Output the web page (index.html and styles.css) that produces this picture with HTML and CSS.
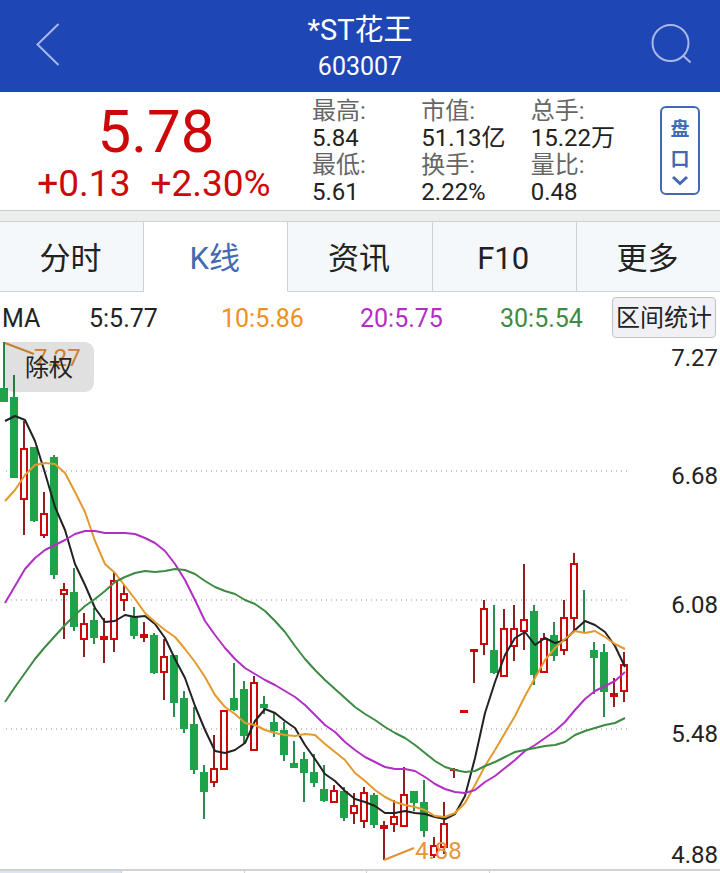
FILE: index.html
```html
<!DOCTYPE html>
<html lang="zh-CN">
<head>
    <meta charset="UTF-8">
    <meta name="viewport" content="width=device-width, initial-scale=1.0">
    <title>*ST花王 603007</title>
    <link rel="stylesheet" href="styles.css">
</head>
<body>
    <header class="topbar">
        <button class="icon-btn" type="button" aria-label="返回">
            <svg width="42" height="44" viewBox="0 0 42 44"><path d="M30.500 2 L9.500 22.500 L30.500 43"/></svg>
        </button>
        <div class="stock">
            <h1 class="stock-name">*ST花王</h1>
            <div class="stock-code">603007</div>
        </div>
        <button class="icon-btn" type="button" aria-label="搜索">
            <svg width="42" height="42" viewBox="0 0 42 42"><circle cx="20.500" cy="20" r="18"/><path d="M33 32.500 L40.500 39.500"/></svg>
        </button>
    </header>

    <section class="quote">
        <div class="price">
            <div class="price-now">5.78</div>
            <div class="price-change"><span>+0.13</span><span>+2.30%</span></div>
        </div>
        <dl class="stats">
            <div><dt>最高:</dt><dd>5.84</dd></div>
            <div><dt>市值:</dt><dd>51.13亿</dd></div>
            <div><dt>总手:</dt><dd>15.22万</dd></div>
            <div><dt>最低:</dt><dd>5.61</dd></div>
            <div><dt>换手:</dt><dd>2.22%</dd></div>
            <div><dt>量比:</dt><dd>0.48</dd></div>
        </dl>
        <button class="depth-btn" type="button">
            <span>盘</span>
            <span>口</span>
            <svg width="18" height="12" viewBox="0 0 18 12"><path d="M2 2 L9 8.500 L16 2"/></svg>
        </button>
    </section>

    <nav class="tabs">
        <button class="tab" type="button">分时</button>
        <button class="tab active" type="button">K线</button>
        <button class="tab" type="button">资讯</button>
        <button class="tab" type="button">F10</button>
        <button class="tab" type="button">更多</button>
    </nav>

    <div class="ma-row">
        <span>MA</span>
        <span>5:5.77</span>
        <span class="ma10">10:5.86</span>
        <span class="ma20">20:5.75</span>
        <span class="ma30">30:5.54</span>
        <button class="range-btn" type="button">区间统计</button>
    </div>

    <main class="chart-wrap">
        <svg class="chart" viewBox="0 342 720 527">
            <g class="grid">
                <path d="M6 471 H627"/>
                <path d="M6 600 H627"/>
                <path d="M6 729 H627"/>
            </g>
            <g id="candles"></g>
            <g id="averages"></g>
            <g class="mark">
                <path d="M5 343 L34 354"/>
                <text x="34" y="366">7.27</text>
                <path d="M384 860 L414 848"/>
                <text x="415" y="859">4.88</text>
            </g>
            <g class="axis">
                <text x="718" y="366">7.27</text>
                <text x="718" y="484">6.68</text>
                <text x="718" y="613">6.08</text>
                <text x="718" y="742">5.48</text>
                <text x="718" y="863">4.88</text>
            </g>
        </svg>
        <button class="rights-btn" type="button">除权</button>
    </main>

    <div class="indicators">
        <div class="indicator on"></div>
        <div class="indicator"></div>
        <div class="indicator"></div>
        <div class="indicator"></div>
        <div class="indicator last"></div>
    </div>

    <script src="chart.js"></script>
</body>
</html>
```
FILE: styles.css
```css
* {
    box-sizing: border-box;
}
body {
    margin: 0;
    background-color: #fff;
    color: #222;
    font-family: Roboto, "Noto Sans CJK SC", sans-serif;
    font-size: 24px;
    line-height: 27px;
}
button {
    margin: 0;
    padding: 0;
    border: none;
    background: none;
    color: inherit;
    font: inherit;
    cursor: pointer;
}
svg {
    display: block;
}

/* Header */
.topbar {
    display: flex;
    justify-content: space-between;
    align-items: center;
    height: 92px;
    padding: 0 28px 4px 28px;
    background-color: #1e46b4;
    color: #fff;
}
.icon-btn {
    display: flex;
    width: 42px;
}
.icon-btn svg {
    fill: none;
    stroke: #a9b8ea;
    stroke-width: 2;
}
.stock {
    padding-top: 6px;
    text-align: center;
}
.stock-name {
    margin: 0;
    font-size: 29px;
    font-weight: 400;
    line-height: 40px;
}
.stock-code {
    font-size: 25px;
    line-height: 34px;
}

/* Quote */
.quote {
    display: grid;
    grid-template-columns: 312px 1fr 40px;
    padding: 6px 20px 4px 0;
}
.price {
    padding-top: 4px;
    color: #cc0808;
    text-align: center;
}
.price-now {
    font-size: 60px;
    line-height: 60px;
}
.price-change {
    display: flex;
    justify-content: center;
    gap: 20px;
    padding-right: 4px;
    font-size: 37px;
    line-height: 44px;
}
.stats {
    display: grid;
    grid-template-columns: repeat(3, 1fr);
    margin: 0 20px 0 0;
}
.stats dt {
    color: #666;
}
.stats dd {
    margin: 0;
}
.depth-btn {
    display: flex;
    flex-direction: column;
    align-items: center;
    height: 89px;
    margin-top: 8px;
    padding-top: 7px;
    border: 2px solid #4369b2;
    border-radius: 6px;
    color: #4369b2;
    font-size: 19px;
    font-weight: 700;
    line-height: 30px;
}
.depth-btn svg {
    fill: none;
    stroke: #4369b2;
    stroke-width: 3;
}

/* Tabs */
.tabs {
    display: flex;
    padding-top: 10px;
    border-top: 1px solid #ccc;
    background-color: #eceeee;
}
.tab {
    flex: 1;
    height: 71px;
    padding: 4px 2px 0 0;
    border: 1px solid #d0d0d0;
    border-left: none;
    background-color: #f4f8fb;
    font-size: 31px;
}
.tab:last-child {
    border-right: none;
}
.tab.active {
    border-bottom-color: #fff;
    background-color: #fff;
    color: #4369b2;
}

/* Moving averages */
.ma-row {
    display: grid;
    grid-template-columns: 87px 132px 139px 1fr 112px 104px;
    align-items: center;
    height: 50px;
    padding: 0 4px 0 2px;
}
.ma-row span {
    padding-top: 3px;
    font-size: 25px;
}
.ma10 {
    color: #ed9121;
}
.ma20 {
    color: #b22fc4;
}
.ma30 {
    color: #3d8b43;
}
.range-btn {
    height: 41px;
    padding-top: 2px;
    border: 1px solid #c4c4c6;
    border-radius: 4px;
    background-color: #f0f0f5;
}

/* Chart */
.chart-wrap {
    position: relative;
}
.chart {
    width: 100%;
    height: auto;
}
.grid path {
    stroke: #c8c8c8;
    stroke-width: 2;
    stroke-dasharray: 1 4;
}
.wick-up {
    fill: #8f2020;
}
.wick-down {
    fill: #2e8b4e;
}
.body-down {
    fill: #1ea34b;
}
.body-flat {
    fill: #cc0808;
}
.body-up {
    fill: #fff;
    stroke: #cc0808;
    stroke-width: 2;
}
.line {
    fill: none;
    stroke-width: 2;
    stroke-linejoin: round;
}
.line-ma5 {
    stroke: #222;
}
.line-ma10 {
    stroke: #e39a2c;
}
.line-ma20 {
    stroke: #b22fc4;
}
.line-ma30 {
    stroke: #3d8b43;
}
.mark path {
    stroke: #df9336;
    stroke-width: 2;
}
.mark text {
    fill: #e8943a;
}
.axis text {
    fill: #222;
    text-anchor: end;
}
.rights-btn {
    position: absolute;
    top: 0;
    left: 4px;
    width: 90px;
    height: 50px;
    padding-top: 3px;
    border-radius: 0 9px 9px 9px;
    background-color: rgba(0, 0, 0, 0.12);
}

/* Indicator strip */
.indicators {
    display: flex;
    height: 4px;
    border-top: 2px solid #d2d2d2;
}
.indicator {
    flex: 0 0 17%;
    border-right: 1px solid #ccc;
}
.indicator.on {
    background-color: #dde5f2;
}
.indicator.last {
    flex: 1;
    border-right: none;
}
```
FILE: chart.js
```javascript
// kind, high, top, bottom, low - one candle every 10 units
// d = down, u = up, f = flat
const candles = [
    ['d', 342, 388, 402, 402], ['d', 375, 397, 478, 478], ['u', 421, 448, 500, 535],
    ['d', 447, 447, 521, 522], ['u', 492, 513, 536, 538], ['d', 455, 457, 575, 579],
    ['u', 583, 589, 595, 639], ['d', 568, 592, 627, 631], ['u', 613, 623, 640, 657],
    ['d', 608, 620, 638, 644], ['f', 618, 636, 640, 663], ['u', 572, 580, 640, 652],
    ['u', 585, 593, 601, 611], ['d', 607, 616, 636, 639], ['f', 622, 634, 638, 642],
    ['d', 633, 635, 673, 674], ['u', 639, 656, 673, 700], ['d', 655, 655, 703, 717],
    ['d', 691, 698, 729, 733], ['d', 707, 724, 770, 774], ['d', 765, 772, 792, 819],
    ['u', 735, 768, 783, 787], ['u', 710, 710, 770, 770], ['d', 663, 698, 710, 711],
    ['d', 681, 689, 736, 744], ['u', 676, 682, 751, 751], ['d', 696, 704, 708, 714],
    ['d', 713, 722, 731, 737], ['d', 722, 730, 755, 761], ['d', 741, 763, 768, 768],
    ['d', 752, 759, 773, 802], ['d', 754, 772, 783, 787], ['d', 765, 789, 801, 802],
    ['u', 785, 790, 803, 803], ['d', 787, 791, 818, 821], ['u', 793, 805, 814, 824],
    ['u', 787, 792, 822, 828], ['d', 793, 795, 825, 828], ['f', 821, 825, 829, 860],
    ['u', 800, 816, 825, 832], ['u', 767, 794, 827, 827], ['d', 791, 791, 803, 811],
    ['d', 780, 802, 831, 837], ['u', 837, 845, 856, 858], ['u', 802, 823, 848, 854],
    ['f', 768, 769, 771, 778], ['f', 710, 710, 713, 713], ['f', 649, 649, 652, 683],
    ['u', 600, 608, 645, 655], ['d', 605, 650, 673, 674], ['u', 609, 628, 677, 677],
    ['u', 605, 628, 647, 661], ['u', 564, 619, 632, 650], ['d', 605, 611, 675, 685],
    ['u', 633, 638, 673, 673], ['d', 622, 635, 656, 661], ['u', 600, 617, 651, 655],
    ['u', 553, 563, 619, 630], ['d', 590, 630, 632, 632], ['d', 642, 650, 658, 694],
    ['d', 644, 652, 692, 717], ['f', 678, 693, 697, 707], ['u', 652, 664, 692, 702]
];

// one value for every candle
const averages = {
    ma5: [421, 416, 420, 441, 473, 507, 530, 564, 585, 608, 622, 621, 615, 617, 616, 624,
        638, 659, 678, 706, 730, 751, 753, 750, 743, 721, 709, 713, 721, 728, 745,
        759, 774, 781, 791, 799, 802, 806, 813, 813, 811, 813, 814, 817, 819, 814,
        796, 758, 713, 682, 655, 638, 632, 645, 638, 643, 640, 630, 621, 625, 632, 646, 667],
    ma10: [501, 490, 475, 465, 463, 464, 473, 492, 512, 541, 564, 573, 586, 599, 613, 622,
        630, 637, 649, 662, 677, 695, 707, 714, 723, 725, 730, 733, 735, 736, 734,
        735, 744, 752, 760, 773, 781, 790, 797, 802, 805, 807, 810, 816, 817, 813,
        803, 785, 766, 750, 733, 716, 696, 678, 660, 648, 639, 631, 633, 631, 637, 644, 649],
    ma20: [603, 586, 569, 558, 550, 545, 540, 534, 531, 531, 533, 533, 533, 534, 538, 543,
        551, 564, 580, 600, 621, 635, 648, 659, 668, 674, 680, 685, 691, 697, 705,
        715, 725, 732, 742, 750, 757, 762, 767, 769, 769, 771, 777, 784, 789, 792,
        793, 790, 782, 776, 768, 760, 751, 745, 738, 731, 722, 710, 699, 691, 686, 681, 672],
    ma30: [702, 687, 673, 659, 647, 636, 625, 615, 606, 599, 591, 582, 577, 573, 571, 572,
        571, 569, 570, 574, 581, 587, 591, 594, 600, 604, 611, 621, 632, 646, 659,
        670, 680, 689, 698, 707, 714, 720, 727, 733, 738, 745, 753, 761, 767, 770,
        772, 771, 766, 762, 757, 752, 750, 748, 746, 745, 742, 735, 731, 728, 725, 723, 718]
};

function rect(cls, x, y, w, h) {
    return `<rect class="${cls}" x="${x}" y="${y}" width="${w}" height="${h}"/>`;
}

let shapes = '';
candles.forEach(([kind, high, top, bottom, low], i) => {
    const x = 4 + i * 10;
    shapes += rect(kind === 'd' ? 'wick-down' : 'wick-up', x - 1, high, 2, low - high);
    if (kind === 'u') {
        shapes += rect('body-up', x - 3, top + 1, 6, bottom - top - 2);
    } else {
        // the last part of a doji at 584 is only its wick
        const half = bottom - top === 2 && kind === 'd' ? 1 : 4;
        shapes += rect(kind === 'd' ? 'body-down' : 'body-flat', x - half, top, half * 2, bottom - top);
    }
});
document.getElementById('candles').innerHTML = shapes;

document.getElementById('averages').innerHTML = Object.keys(averages).map(name => {
    const points = averages[name].map((y, i) => `${5 + i * 10},${y}`).join(' ');
    return `<polyline class="line line-${name}" points="${points}"/>`;
}).join('');
```
